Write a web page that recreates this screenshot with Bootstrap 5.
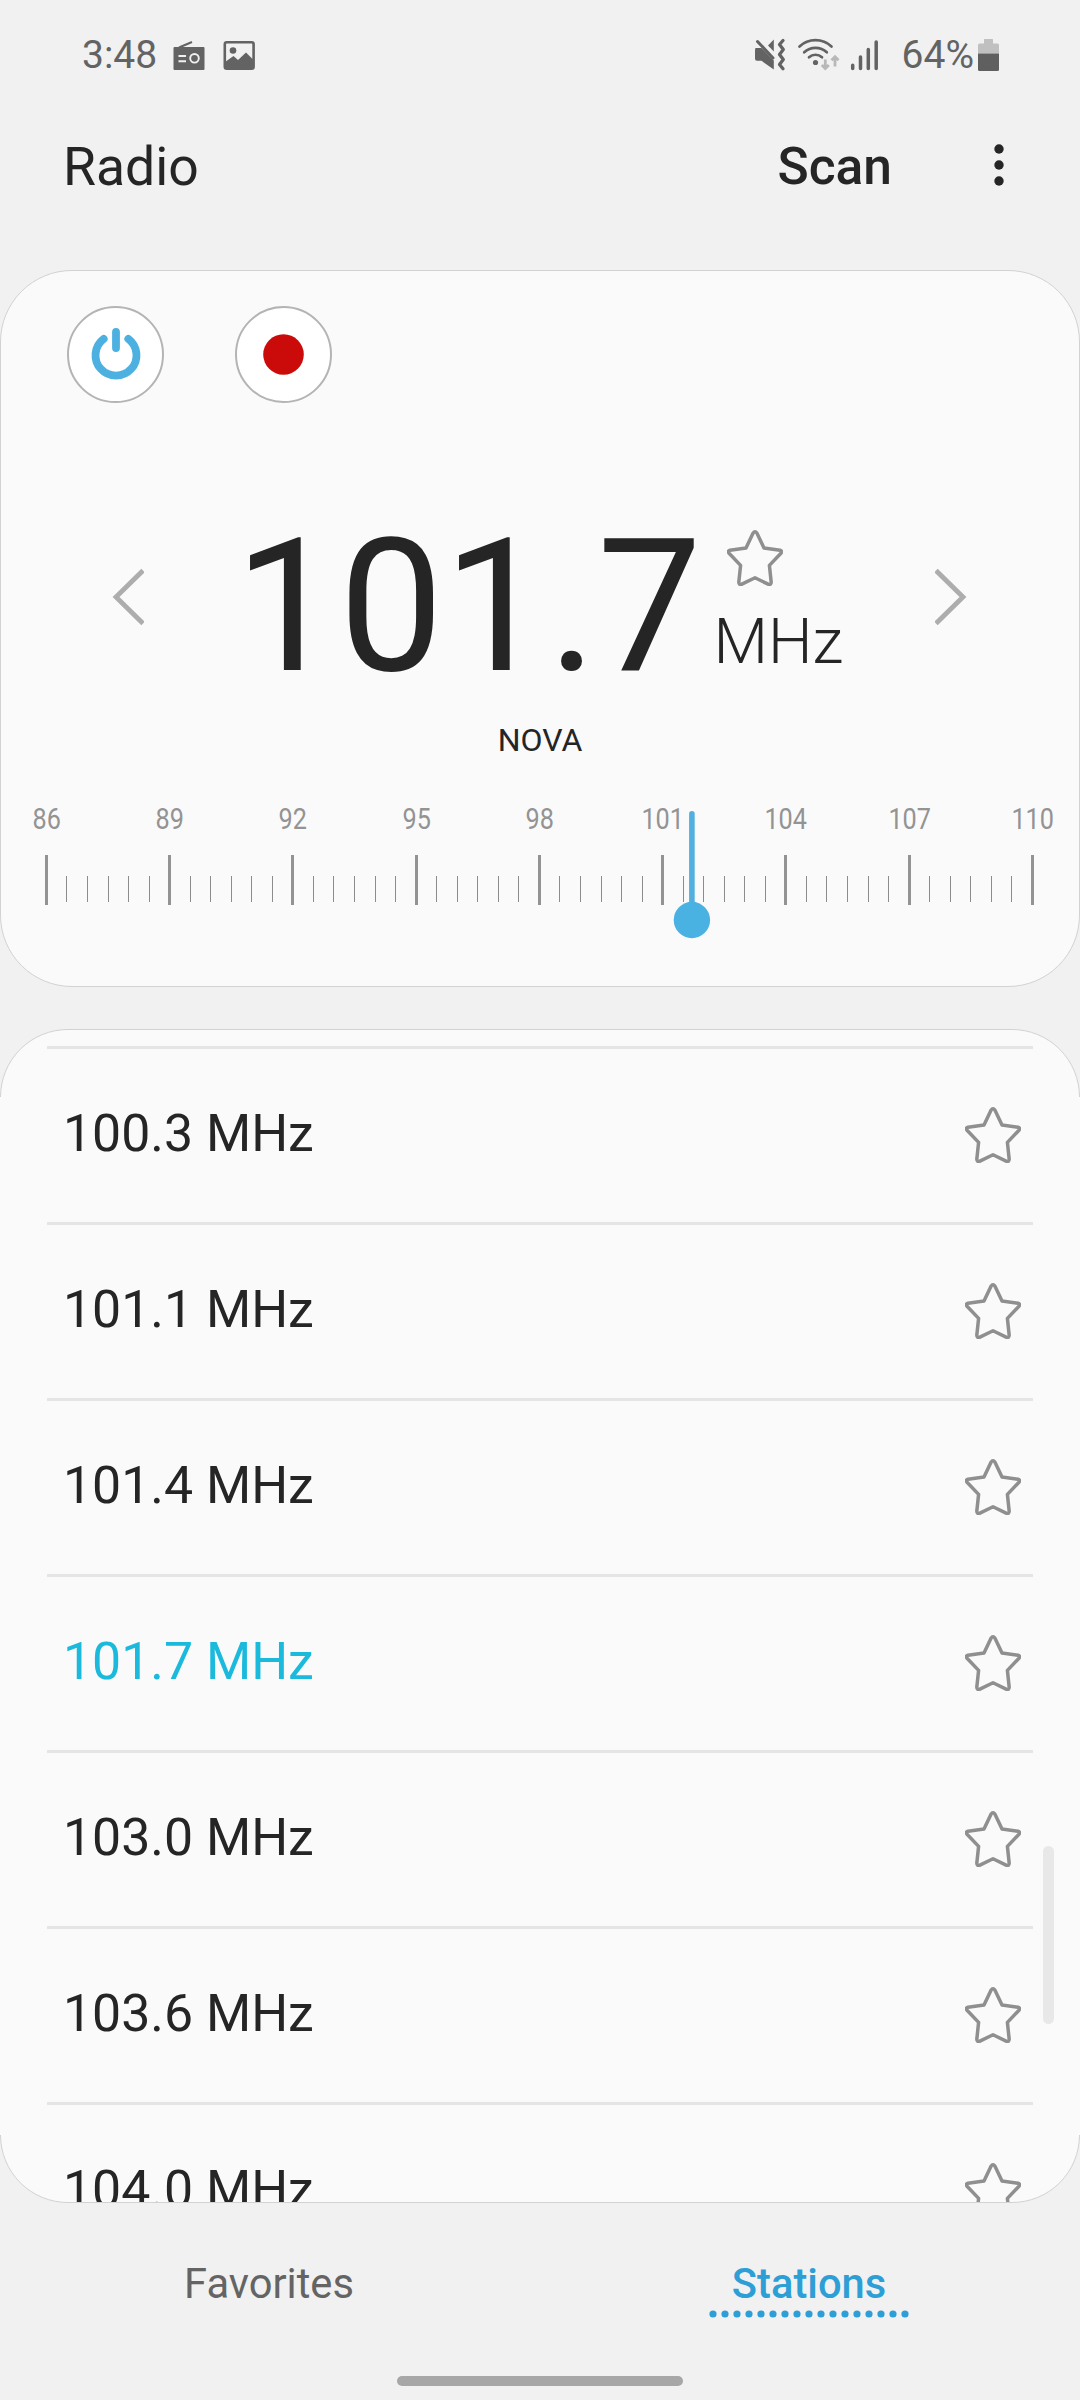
<!DOCTYPE html>
<html lang="en">
<head>
<meta charset="utf-8">
<meta name="viewport" content="width=device-width, initial-scale=1">
<title>Radio</title>
<link href="https://cdn.jsdelivr.net/npm/bootstrap@5.3.0/dist/css/bootstrap.min.css" rel="stylesheet">
<style>
body{background:#f1f1f1;color:#252525;font-family:Roboto,"Liberation Sans",sans-serif;width:1080px;height:2400px;overflow:hidden}
svg{display:block;flex:none}
.btn{--bs-btn-padding-x:0;--bs-btn-padding-y:0;--bs-btn-border-width:0}
.statusbar{height:111px;padding:0 81px 0 82px;font-size:39px;line-height:111px;color:#636363}
.apphead{height:159px;padding:0 76px 47px 63px;line-height:112px}
.apptitle{font-size:53.5px;line-height:112px;font-weight:400}
.scan-btn{font-size:51.5px;line-height:110px;font-weight:500;color:#252525;margin-right:102px}
.panel{background:#fafafa;border:1px solid #d2d2d2}
.tuner{height:717px;border-radius:72px}
.controls{padding:35px 0 0 66px;gap:71px}
.round-btn{width:97px;height:97px;border:2px solid #b4b4b4;border-radius:50%;background:#fff}
.freqrow{height:220px;margin-top:93px;padding:0 112px 0 111px}
.freq{font-size:186px;line-height:222px;margin-left:90.5px;width:471px}
.unitcol{padding-top:34px;margin-left:8px}
.unit{font-size:63px;line-height:76px;font-weight:300;margin-top:18px}
.chev{margin-bottom:18px}
.rds{font-size:32px;line-height:48px}
.stations{height:1174px;margin-top:42px;border-radius:68px;position:relative}
.stations::before,.stations::after{content:"";position:absolute;top:67px;bottom:67px;width:1px;background:#fafafa}
.stations::before{left:-1px}
.stations::after{right:-1px}
.scroller{height:1172px;border-radius:67px;overflow:hidden;padding:16px 46px 0}
.station{height:176px;border-top:3px solid #e5e5e5;padding:0 12px 4px 16px;font-size:51.8px;line-height:169px;flex:none}
.station svg{margin-top:2px}
.station.tuned{color:#1bbadd}
.thumb{position:absolute;right:25px;top:816px;width:11px;height:178px;border-radius:6px;background:#e8e8e8}
.tabs{height:173px}
.tabitem{font-size:41.7px;line-height:60px;color:#646464;padding-top:51px;padding-right:2px}
.tabitem.on{font-weight:500;color:#2e9fd6}
.tabdots{margin-top:-4px}
.homebar{width:286px;height:10px;border-radius:5px;background:#a7a7a7}
</style>
<script src="https://cdn.jsdelivr.net/npm/bootstrap@5.3.0/dist/js/bootstrap.bundle.min.js"></script>
</head>
<body>
<svg width="0" height="0" class="position-absolute">
  <symbol id="star" viewBox="0 0 56 56"><path d="M26 3.200q2-2.800 4 0L37 18l16 2.200q2.800.900.700 3.300L42.400 35.400l1.800 16.900q-.100 2.700-2.600 2.100L28 47.800l-13.600 6.600q-2.500.600-2.600-2.100l1.800-16.900L2.300 23.500q-2.100-2.400.700-3.300L19 18z" fill="none" stroke="#8f8f8f" stroke-width="3.500" stroke-linejoin="round"/></symbol>
</svg>

<div class="statusbar d-flex align-items-center">
  <span>3:48</span>
  <svg style="margin-left:15px" width="34" height="30" viewBox="172 40 34 30"><path d="M179 46.500L192 41" stroke="#636363" stroke-width="2"/><rect x="173.500" y="46" width="31" height="23" rx="1" fill="#636363"/><circle cx="194.500" cy="57.300" r="4.300" fill="none" stroke="#f1f1f1" stroke-width="1.900"/><path d="M178.500 55h7.500M178.500 60.300h7.500" stroke="#f1f1f1" stroke-width="2"/></svg>
  <svg style="margin-left:17px" width="33" height="30" viewBox="223 40 33 30"><rect x="224.800" y="41.300" width="28.800" height="26.500" rx="2" fill="none" stroke="#636363" stroke-width="2.600"/><circle cx="233" cy="49.500" r="3.300" fill="#636363"/><path d="M225 61l8.500-6 4.500 4 8-7.500 8 8V68h-29z" fill="#636363"/></svg>
  <svg class="ms-auto" width="132" height="36" viewBox="750 37 132 36" fill="none" stroke-linecap="round">
    <path d="M755.500 47h6l12.300 12.500V68.500L761.500 59.800h-4.500q-2 0-2-2V49z" fill="#636363"/>
    <path d="M768 44.500l5.800-6V50.500z" fill="#636363"/>
    <path d="M757.500 40.500L773 57" stroke="#636363" stroke-width="3"/>
    <path d="M783 39.500l-3.500 4 3.800 5-3.800 5 3.800 5-3.800 5 3.500 4.300" stroke="#636363" stroke-width="3.300" stroke-linejoin="round"/>
    <path d="M799.500 45.500a23.500 23.500 0 0 1 32 0M804.200 51.300a16.500 16.500 0 0 1 22.600 0M809 56.300a9.600 9.600 0 0 1 13 0" stroke="#636363" stroke-width="2.700"/>
    <circle cx="815.500" cy="61.500" r="2.600" fill="#636363"/>
    <path d="M825.300 58.500v8M821.800 64l3.500 3.500 3.500-3.500M835 65.500v-9M831.500 59.300l3.500-3.500 3.500 3.500" stroke="#b8b8b8" stroke-width="2.800" stroke-linecap="butt"/>
    <path d="M852.700 64.200v3.300M860.500 56v11.500M868.300 48.500v19M876.200 41v26.500" stroke="#636363" stroke-width="3.500"/>
  </svg>
  <span style="margin-left:20px">64%</span>
  <svg style="margin-left:4px" width="21" height="34" viewBox="978 37.500 21 34"><path d="M984 42v-3.500q0-1.500 1.500-1.500h6q1.500 0 1.500 1.500V42h4.500q1.500 0 1.500 1.500V52h-21v-8.500q0-1.500 1.500-1.500z" fill="#c0c0c0"/><path d="M978 52h21v16q0 1.500-1.500 1.500h-18q-1.500 0-1.500-1.500z" fill="#5f5f5f"/></svg>
</div>

<header class="apphead d-flex align-items-center">
  <h1 class="apptitle mb-0 me-auto">Radio</h1>
  <button class="btn scan-btn">Scan</button>
  <svg class="mb-1" width="10" height="42" viewBox="0 0 10 42" fill="#252525"><circle cx="5" cy="5" r="4.700"/><circle cx="5" cy="21" r="4.700"/><circle cx="5" cy="37" r="4.700"/></svg>
</header>

<section class="panel tuner">
  <div class="controls d-flex">
    <button class="round-btn p-0 d-flex align-items-center justify-content-center" aria-label="Power"><svg width="56" height="56" viewBox="-28 -28 56 56" fill="none" stroke="#4cb1e1" stroke-width="7.800" stroke-linecap="round"><path d="M-12.300-16.200A20.500 20.500 0 1 0 12.300-16.200M0-23v16"/></svg></button>
    <button class="round-btn p-0 d-flex align-items-center justify-content-center" aria-label="Record"><svg width="41" height="41" viewBox="0 0 41 41"><circle cx="20.500" cy="20.500" r="20.300" fill="#cb0b0a"/></svg></button>
  </div>
  <div class="freqrow d-flex align-items-center">
    <svg class="chev" width="32" height="58" viewBox="0 0 32 58" fill="none" stroke="#adadad" stroke-width="4.800"><path d="M31 2.500L4 29l27 26.500"/></svg>
    <span class="freq">101.7</span>
    <div class="unitcol align-self-start">
      <svg style="margin-left:13px" width="56" height="56"><use href="#star"/></svg>
      <div class="unit">MHz</div>
    </div>
    <svg class="chev ms-auto" width="32" height="58" viewBox="0 0 32 58" fill="none" stroke="#adadad" stroke-width="4.800"><path d="M1 2.500L28 29 1 55.500"/></svg>
  </div>
  <div class="rds text-center">NOVA</div>
  <svg id="dial" width="1078" height="222" viewBox="1 764 1078 222"></svg>
</section>

<section class="panel stations">
  <div class="scroller d-flex flex-column">
    <div class="station d-flex align-items-center justify-content-between">100.3 MHz<svg width="56" height="56"><use href="#star"/></svg></div>
    <div class="station d-flex align-items-center justify-content-between">101.1 MHz<svg width="56" height="56"><use href="#star"/></svg></div>
    <div class="station d-flex align-items-center justify-content-between">101.4 MHz<svg width="56" height="56"><use href="#star"/></svg></div>
    <div class="station tuned d-flex align-items-center justify-content-between">101.7 MHz<svg width="56" height="56"><use href="#star"/></svg></div>
    <div class="station d-flex align-items-center justify-content-between">103.0 MHz<svg width="56" height="56"><use href="#star"/></svg></div>
    <div class="station d-flex align-items-center justify-content-between">103.6 MHz<svg width="56" height="56"><use href="#star"/></svg></div>
    <div class="station d-flex align-items-center justify-content-between">104.0 MHz<svg width="56" height="56"><use href="#star"/></svg></div>
  </div>
  <div class="thumb"></div>
</section>

<nav class="tabs row g-0">
  <div class="col-6 tabitem text-center">Favorites</div>
  <div class="col-6 tabitem on d-flex flex-column align-items-center">Stations
    <svg class="tabdots" width="200" height="8" viewBox="0 0 200 8"><path d="M4 4h192.100" stroke="#2e9fd6" stroke-width="7.200" stroke-linecap="round" stroke-dasharray="0 12"/></svg>
  </div>
</nav>
<div class="homebar mx-auto"></div>

<script>
// FM dial: one long tick every 3 MHz, short ticks every 0.5 MHz
const left = 46.4, step = 986 / 48;
let out = '';
for (let i = 0; i <= 48; i++) {
  const x = Math.round(left + i * step - 0.5);
  if (i % 6 === 0) {
    out += `<rect x="${x - 1}" y="855" width="3" height="50" fill="#939393"/>`;
    out += `<text transform="translate(${x + 0.7} 829) scale(.87 1)" font-size="29" text-anchor="middle" fill="#939393">${86 + i / 2}</text>`;
  } else {
    out += `<rect x="${x}" y="876" width="1" height="26" fill="#8c8c8c"/>`;
  }
}
out += '<path d="M691.900 813.800V912" stroke="#52b0de" stroke-width="5.600" stroke-linecap="round"/><circle cx="691.900" cy="920" r="18.200" fill="#4ab2e3"/>';
document.getElementById('dial').innerHTML = out;
</script>
</body>
</html>
